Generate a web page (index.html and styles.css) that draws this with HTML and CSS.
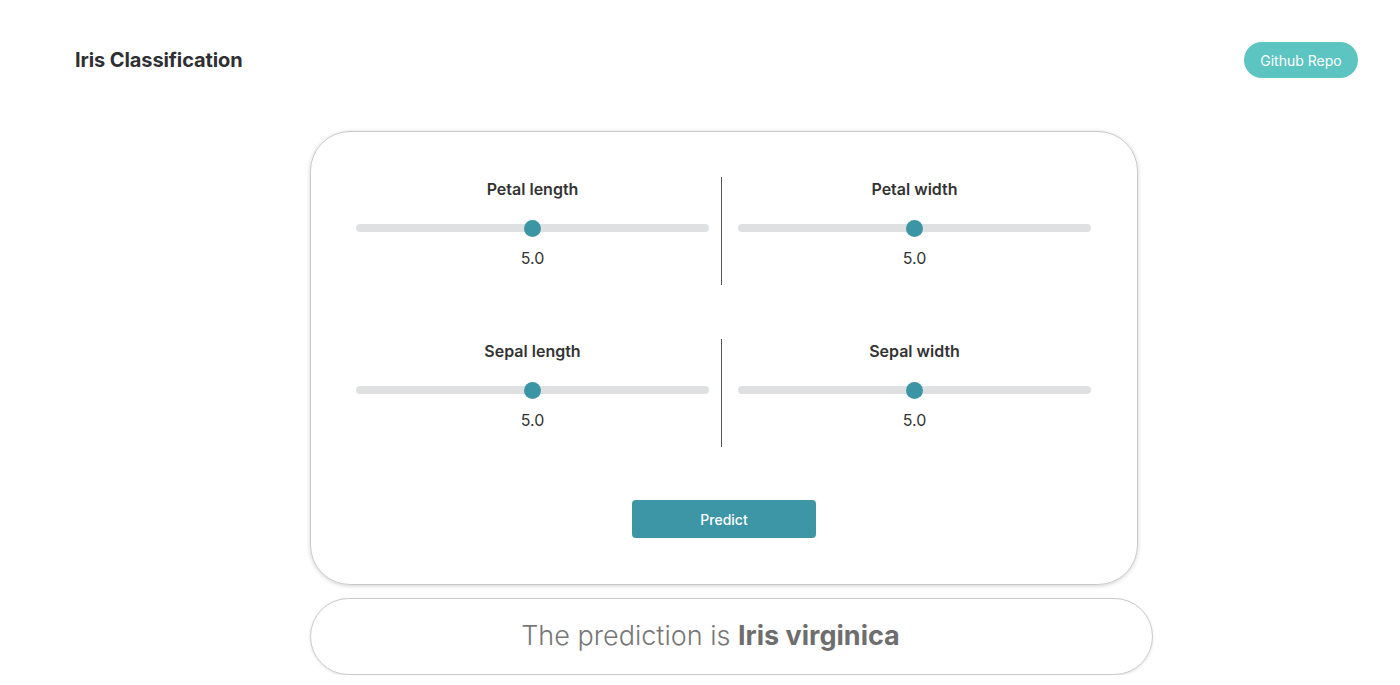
FILE: index.html
```html
<!DOCTYPE html>
<html lang="en">
<head>
<meta charset="utf-8">
<title>Iris Classification</title>
<link rel="stylesheet" href="styles.css">
</head>
<body>
<header class="topbar">
  <h1 class="brand">Iris Classification</h1>
  <a class="repo-btn" href="#">Github Repo</a>
</header>
<main class="main">
  <section class="card">
    <div class="grid">
      <div class="field">
        <div class="field-label">Petal length</div>
        <input class="slider" type="range" min="0" max="10" step="0.1" value="5">
        <div class="field-value">5.0</div>
      </div>
      <div class="field field-right">
        <div class="field-label">Petal width</div>
        <input class="slider" type="range" min="0" max="10" step="0.1" value="5">
        <div class="field-value">5.0</div>
      </div>
      <div class="field">
        <div class="field-label">Sepal length</div>
        <input class="slider" type="range" min="0" max="10" step="0.1" value="5">
        <div class="field-value">5.0</div>
      </div>
      <div class="field field-right">
        <div class="field-label">Sepal width</div>
        <input class="slider" type="range" min="0" max="10" step="0.1" value="5">
        <div class="field-value">5.0</div>
      </div>
    </div>
    <div class="actions">
      <button class="predict-btn" type="button">Predict</button>
    </div>
  </section>
  <section class="result">
    <p class="result-text">The prediction is <strong class="result-strong">Iris virginica</strong></p>
  </section>
</main>
</body>
</html>
```

FILE: styles.css
```css
* { box-sizing: border-box; }

html, body {
  margin: 0;
  padding: 0;
  background: #ffffff;
}

body {
  font-family: Inter, "Noto Sans", "Liberation Sans", sans-serif;
  color: #333333;
}

.topbar {
  display: flex;
  align-items: center;
  justify-content: space-between;
  padding: 42px 42px 0 75px;
  height: 78px;
}

.brand {
  margin: 0;
  font-size: 20px;
  font-weight: 700;
  color: #2e2f33;
  letter-spacing: -0.1px;
}

.repo-btn {
  display: flex;
  align-items: center;
  justify-content: center;
  width: 114px;
  height: 36px;
  border-radius: 18px;
  background: #5cc4c1;
  color: #ffffff;
  font-size: 14px;
  text-decoration: none;
}

.main {
  display: flex;
  flex-direction: column;
  align-items: flex-start;
  padding: 53px 0 0 310px;
  gap: 13px;
}

.card {
  width: 828px;
  border: 1px solid #c9c9c9;
  border-radius: 40px;
  box-shadow: 0 1px 4px rgba(0, 0, 0, 0.18);
  padding: 45px 30px 46px 33px;
}

.grid {
  display: grid;
  grid-template-columns: 377px 386px;
  row-gap: 54px;
}

.field {
  display: flex;
  flex-direction: column;
  align-items: center;
  padding-bottom: 15px;
}

.field-right {
  border-left: 1px solid #555555;
}

.field-label {
  font-size: 16px;
  line-height: 24px;
  font-weight: 600;
  color: #333333;
}

.slider {
  -webkit-appearance: none;
  appearance: none;
  width: 353px;
  height: 24px;
  margin: 15px 0 0 0;
  background: transparent;
  outline: none;
}

.slider::-webkit-slider-runnable-track {
  height: 8px;
  border-radius: 4px;
  background: #dfe0e1;
}

.slider::-webkit-slider-thumb {
  -webkit-appearance: none;
  appearance: none;
  width: 17px;
  height: 17px;
  margin-top: -4.5px;
  border: none;
  border-radius: 50%;
  background: #3c95a5;
}

.slider::-moz-range-track {
  height: 8px;
  border-radius: 4px;
  background: #dfe0e1;
}

.slider::-moz-range-thumb {
  width: 17px;
  height: 17px;
  border: none;
  border-radius: 50%;
  background: #3c95a5;
}

.field-value {
  margin-top: 6px;
  font-size: 16px;
  line-height: 24px;
  color: #333333;
}

.actions {
  display: flex;
  justify-content: center;
  padding-top: 53px;
  padding-right: 3px;
}

.predict-btn {
  width: 184px;
  height: 38px;
  border: none;
  border-radius: 4px;
  background: #3d96a6;
  color: #ffffff;
  font-family: Inter, "Noto Sans", "Liberation Sans", sans-serif;
  font-size: 14px;
  font-weight: 500;
}

.result {
  width: 843px;
  height: 77px;
  border: 1px solid #c9c9c9;
  border-radius: 40px;
  box-shadow: 0 1px 3px rgba(0, 0, 0, 0.12);
  display: flex;
  align-items: center;
  justify-content: center;
  padding-right: 42px;
  padding-bottom: 2px;
}

.result-text {
  margin: 0;
  font-size: 27px;
  font-weight: 300;
  color: #777777;
}

.result-strong {
  font-weight: 700;
  color: #6e6e6e;
}
```
